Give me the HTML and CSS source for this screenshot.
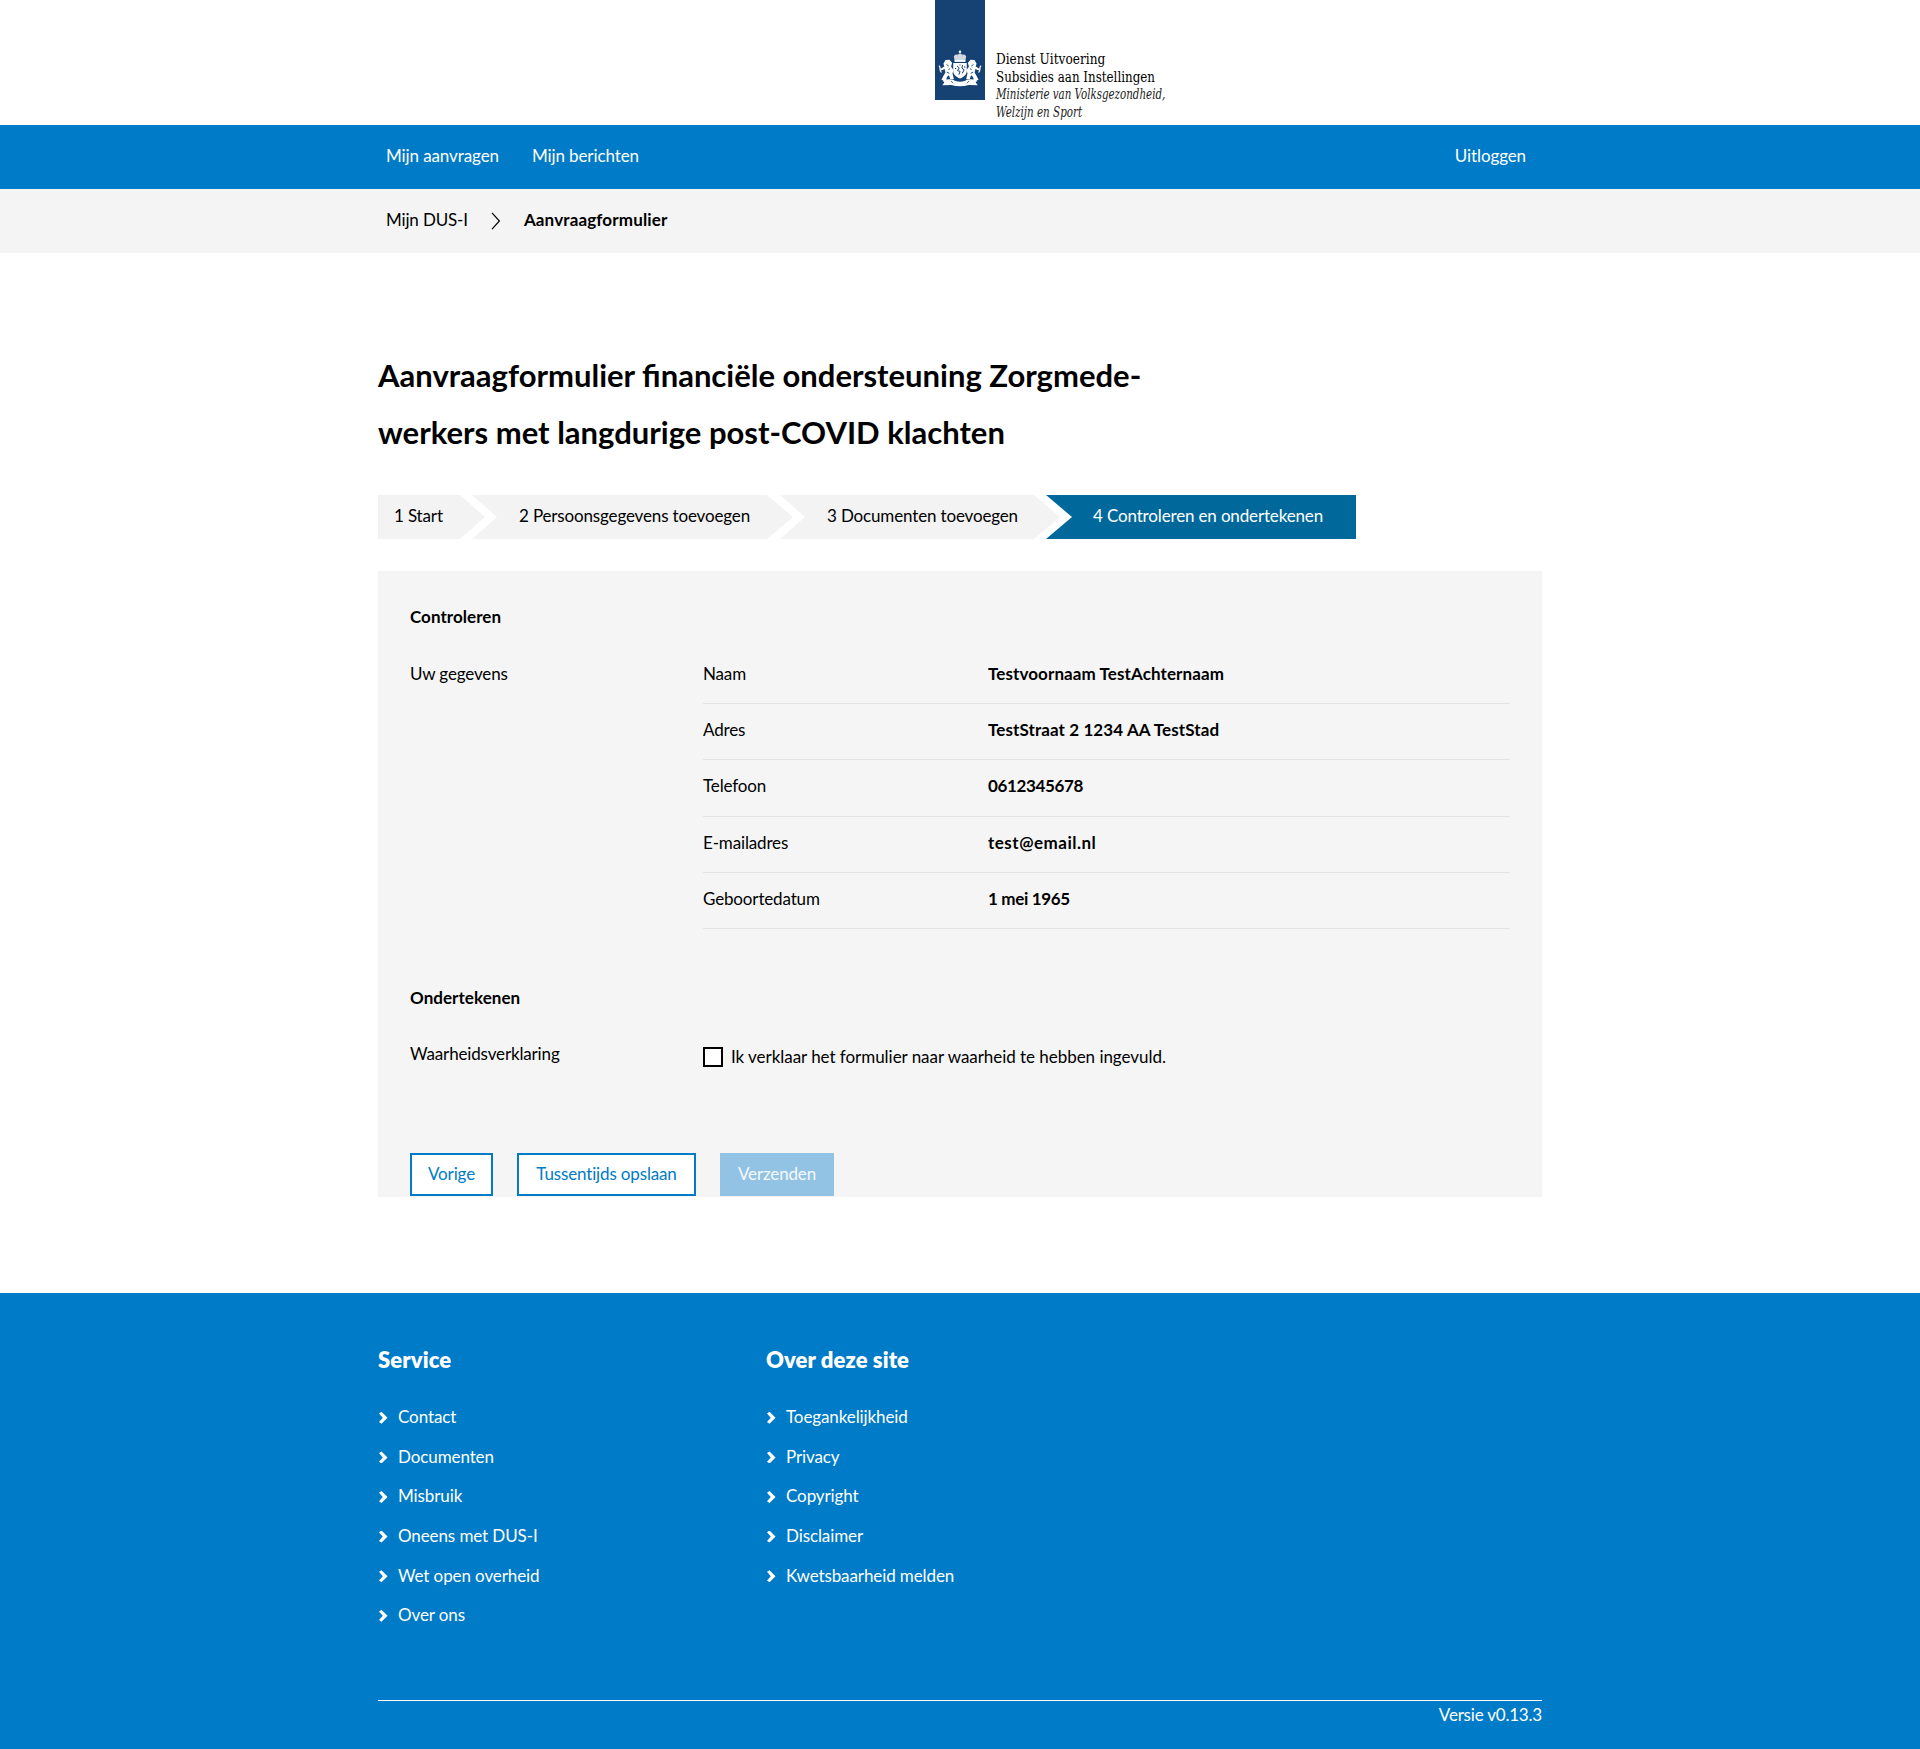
FILE: index.html
```html
<!DOCTYPE html>
<html lang="nl">
<head>
<meta charset="utf-8">
<title>Aanvraagformulier - Mijn DUS-I</title>
<link rel="stylesheet" href="styles.css">
</head>
<body>
<header class="header">
  <div class="logo">
    <div class="logo-ribbon">
      <svg class="crest" viewBox="0 0 44 37" width="44" height="37" aria-hidden="true">
        <g fill="#fff">
          <circle cx="22" cy="1.800" r="1.300"/>
          <path d="M16.500 10 15.800 6.500q1.200-2.800 3.700-1.800L22 3.200l2.500 1.500q2.500-1 3.700 1.800L27.500 10z" opacity=".8"/>
          <path d="M16.500 10h11v1.900h-11z"/>
          <path d="M15.200 13h13.600v8c0 3.800-3.200 6-6.800 7.600-3.600-1.600-6.800-3.800-6.800-7.600z"/>
          <path d="M5.500 13.500 7.500 10l4-.2 2.600 3-1 4 2.400 3.200-1 3.600 1.400 5.600-3.600.1-1.400-4-2 1.800-.6 2.800H3.400l1.800-3.600 2.200-3.800L6.600 19l-3.200 1.600-1.200-1.600 4-2.600z"/>
          <path d="M38.500 13.500 36.500 10l-4-.2-2.600 3 1 4-2.400 3.200 1 3.600-1.400 5.600 3.600.1 1.400-4 2 1.800.6 2.800H40.600l-1.800-3.600-2.200-3.800.8-3.500 3.200 1.600 1.200-1.600-4-2.600z"/>
          <path d="M4.500 30.200q9-2.400 12.500.6 5 1.800 10 0 3.500-3 12.500-.6l-1.800 2.400 2 2.600-8.900-.2q-8.800 2.400-17.600 0l-8.900.2 2-2.600z"/>
        </g>
        <path d="M3.500 22.500C.5 20.500 3.800 18.500 1 15.600M40.500 22.500c3-2-.3-4 2.500-6.900" fill="none" stroke="#fff" stroke-width="1.300"/>
        <g fill="none" stroke="#154273">
          <path d="M19 16l2.300 2-1.800 2.600 2.600.8-1.200 3.300M24.500 15l-.6 3.200 2.200 1.600-1.800 3.500M17 18.500h1.200M26 17h1.500M21.500 15h1"/>
          <path d="M8.500 14.500l2.200 1.600M35.500 14.500l-2.200 1.600M8.800 22l2.600 1.400M35.200 22l-2.600 1.400M10.500 19.500l1.500-.8M33.500 19.500l-1.500-.8M13.200 31.200l1.800 2M30.800 31.200l-1.800 2" stroke-width=".9"/>
        </g>
      </svg>
    </div>
    <div class="logo-text">
      <span class="l1">Dienst Uitvoering</span>
      <span class="l2">Subsidies aan Instellingen</span>
      <em class="l3">Ministerie van Volksgezondheid,</em>
      <em class="l4">Welzijn en Sport</em>
    </div>
  </div>
</header>
<nav class="nav">
  <div class="container bar">
    <a>Mijn aanvragen</a>
    <a>Mijn berichten</a>
    <a class="logout">Uitloggen</a>
  </div>
</nav>
<div class="breadcrumb">
  <div class="container bar crumbs">
    <a>Mijn DUS-I</a>
    <svg width="10" height="18" viewBox="0 0 10 18" aria-hidden="true"><path d="M1 .8 8.400 9 1 17.200" fill="none" stroke="#000" stroke-width="1.200"/></svg>
    <strong>Aanvraagformulier</strong>
  </div>
</div>
<main class="container main">
  <h1>Aanvraagformulier financiële ondersteuning Zorgmede-<br>werkers met langdurige post-COVID klachten</h1>
  <ol class="steps">
    <li class="step s1">1 Start</li>
    <li class="step s2">2 Persoonsgegevens toevoegen</li>
    <li class="step s3">3 Documenten toevoegen</li>
    <li class="step s4">4 Controleren en ondertekenen</li>
  </ol>
  <form class="panel">
    <h2>Controleren</h2>
    <section class="row">
      <div class="row-label">Uw gegevens</div>
      <dl>
        <div><dt>Naam</dt><dd>Testvoornaam TestAchternaam</dd></div>
        <div><dt>Adres</dt><dd>TestStraat 2 1234 AA TestStad</dd></div>
        <div><dt>Telefoon</dt><dd class="number">0612345678</dd></div>
        <div><dt>E-mailadres</dt><dd class="email">test@email.nl</dd></div>
        <div><dt>Geboortedatum</dt><dd class="number">1 mei 1965</dd></div>
      </dl>
    </section>
    <h2 class="second">Ondertekenen</h2>
    <section class="row">
      <div class="row-label">Waarheidsverklaring</div>
      <label class="check"><input type="checkbox"><span>Ik verklaar het formulier naar waarheid te hebben ingevuld.</span></label>
    </section>
    <div class="buttons">
      <button type="button" class="b1">Vorige</button>
      <button type="button" class="b2">Tussentijds opslaan</button>
      <button type="button" class="b3" disabled>Verzenden</button>
    </div>
  </form>
</main>
<footer class="footer">
  <div class="container">
    <div class="columns">
      <section>
        <h3>Service</h3>
        <ul>
          <li>Contact</li>
          <li>Documenten</li>
          <li>Misbruik</li>
          <li>Oneens met DUS-I</li>
          <li>Wet open overheid</li>
          <li>Over ons</li>
        </ul>
      </section>
      <section>
        <h3>Over deze site</h3>
        <ul>
          <li>Toegankelijkheid</li>
          <li>Privacy</li>
          <li>Copyright</li>
          <li>Disclaimer</li>
          <li>Kwetsbaarheid melden</li>
        </ul>
      </section>
    </div>
    <div class="version">Versie v0.13.3</div>
  </div>
</footer>
</body>
</html>
```
FILE: styles.css
```css
* { box-sizing: border-box; }
body {
  margin: 0;
  background: #fff;
  color: #000;
  font: 400 17px/28px Lato, "Noto Sans", sans-serif;
  letter-spacing: -0.15px;
}
h1, h2, h3, ol, ul, dl, dd { margin: 0; padding: 0; list-style: none; }
.container { width: 1164px; margin: 0 auto; }

.header { height: 125px; }
.logo { display: flex; padding-left: 935px; }
.logo-ribbon { width: 50px; height: 100px; background: #154273; padding: 50px 0 0 3px; }
.crest { display: block; }
.logo-text {
  display: flex;
  flex-direction: column;
  align-items: flex-start;
  padding: 51px 0 0 11px;
  font: 15px/17.600px "DejaVu Serif Condensed", "DejaVu Serif", serif;
  font-stretch: condensed;
  letter-spacing: 0;
  white-space: nowrap;
}
.logo-text > * { transform-origin: 0 50%; }
.l1 { transform: scaleX(0.9); }
.l2 { transform: scaleX(0.882); }
.l3 { transform: scaleX(0.762); color: #222; }
.l4 { transform: scaleX(0.766); color: #222; }

.bar { display: flex; align-items: center; height: 64px; padding: 0 16px 3px 8px; }
.nav { background: #007bc7; color: #fff; }
.nav a { margin-right: 33px; letter-spacing: -0.1px; }
.nav .logout { margin: 0 0 0 auto; }
.breadcrumb { background: #f4f4f4; }
.crumbs strong { font-weight: 700; letter-spacing: 0.15px; margin-left: 23px; }
.crumbs svg { margin: 3px 0 0 23px; }

.main { padding: 94px 0 96px; }
h1 { font-size: 31px; line-height: 57px; font-weight: 700; letter-spacing: 0; }
.steps { display: flex; margin-top: 34px; }
.step {
  height: 44px;
  padding: 0 0 3px 47px;
  line-height: 41px;
  background: #f3f3f3;
  white-space: nowrap;
  clip-path: polygon(0 0, calc(100% - 26px) 0, 100% 50%, calc(100% - 26px) 100%, 0 100%, 25px 50%);
}
.s1 { width: 107px; padding-left: 16px; clip-path: polygon(0 0, 82px 0, 100% 50%, 82px 100%, 0 100%); }
.s2 { width: 321px; margin-left: -13px; }
.s3 { width: 280px; margin-left: -13px; }
.s4 {
  width: 310px;
  margin-left: -14px;
  background: #01689b;
  color: #fff;
  clip-path: polygon(0 0, 100% 0, 100% 100%, 0 100%, 26px 50%);
}

.panel { margin-top: 32px; padding: 32px 32px 0; background: #f5f5f5; height: 626px; }
h2 { font-size: 17px; line-height: 28px; font-weight: 700; letter-spacing: 0.05px; }
.row { display: grid; grid-template-columns: 293px 1fr; margin-top: 16.500px; }
.row-label { padding-top: 12px; }
dl > div {
  display: grid;
  grid-template-columns: 285px 1fr;
  height: 56.400px;
  padding-top: 12px;
  border-bottom: 1px solid #e3e3e3;
}
dd { font-weight: 700; letter-spacing: 0.1px; }
.number { letter-spacing: -0.350px; }
.email { letter-spacing: 0.500px; }
.second { margin-top: 54.400px; }
.check { display: flex; align-items: center; padding-top: 15px; margin-bottom: 1px; letter-spacing: -0.040px; }
.check input {
  appearance: none;
  width: 20px;
  height: 20px;
  margin: 0 8px 0 0;
  background: #fff;
  border: 2px solid #000;
}
.buttons { display: flex; margin-top: 81px; }
button {
  height: 43px;
  padding: 0 0 2px;
  font: inherit;
  letter-spacing: inherit;
  color: #007bc7;
  background: #fff;
  border: 2px solid #007bc7;
}
.b1 { width: 83px; }
.b2 { width: 179px; margin-left: 24px; }
.b3 { width: 114px; margin-left: 24px; border: 0; background: #93c3e4; color: #f4f9fc; }

.footer { background: #007bc7; color: #fff; height: 456px; padding-top: 47px; letter-spacing: -0.1px; }
.columns { display: grid; grid-template-columns: 388px 1fr; height: 361px; border-bottom: 1px solid #fff; }
h3 { font-size: 22px; line-height: 40px; font-weight: 800; letter-spacing: 0.1px; margin-bottom: 17.500px; }
li { white-space: nowrap; }
.footer li { display: flex; align-items: center; height: 39.600px; }
.footer li::before {
  content: "";
  width: 9px;
  height: 12px;
  margin: 1px 10px 0 1px;
  background: #fff;
  clip-path: polygon(0 14%, 28% 0, 95% 50%, 28% 100%, 0 86%, 42% 50%);
}
.version { text-align: right; letter-spacing: -0.200px; }
```
